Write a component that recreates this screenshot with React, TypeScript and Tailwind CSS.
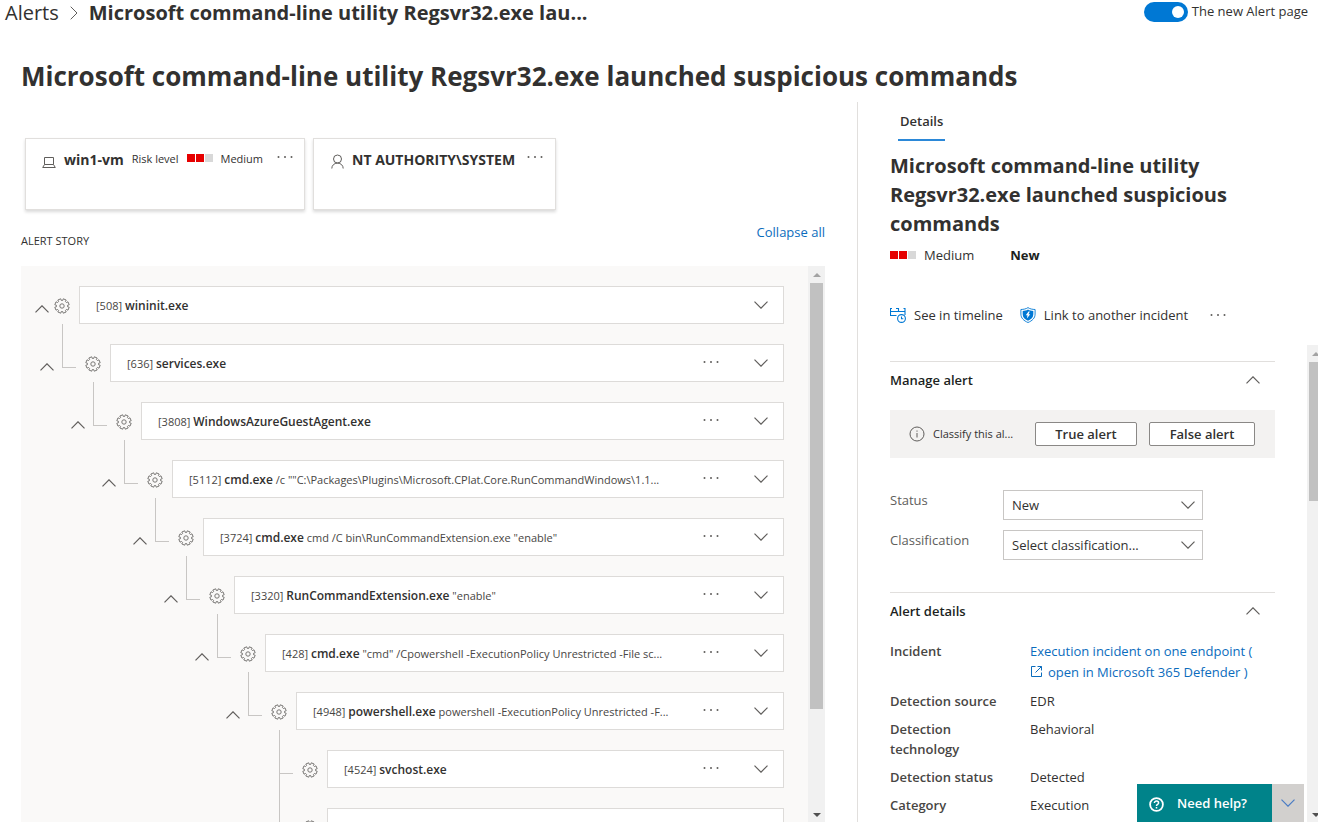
import React, { useState } from "react";

type ProcessNode = {
  id: string;
  pid?: string;
  name?: string;
  args?: string;
  noMenu?: boolean;
  hasMore?: boolean;
  children?: ProcessNode[];
};

const tree: ProcessNode = {
  id: "p0",
  pid: "508",
  name: "wininit.exe",
  noMenu: true,
  children: [
    {
      id: "p1",
      pid: "636",
      name: "services.exe",
      children: [
        {
          id: "p2",
          pid: "3808",
          name: "WindowsAzureGuestAgent.exe",
          children: [
            {
              id: "p3",
              pid: "5112",
              name: "cmd.exe",
              args: '/c ""C:\\Packages\\Plugins\\Microsoft.CPlat.Core.RunCommandWindows\\1.1...',
              children: [
                {
                  id: "p4",
                  pid: "3724",
                  name: "cmd.exe",
                  args: 'cmd /C bin\\RunCommandExtension.exe "enable"',
                  children: [
                    {
                      id: "p5",
                      pid: "3320",
                      name: "RunCommandExtension.exe",
                      args: '"enable"',
                      children: [
                        {
                          id: "p6",
                          pid: "428",
                          name: "cmd.exe",
                          args: '"cmd" /Cpowershell -ExecutionPolicy Unrestricted -File sc...',
                          children: [
                            {
                              id: "p7",
                              pid: "4948",
                              name: "powershell.exe",
                              args: "powershell -ExecutionPolicy Unrestricted -F...",
                              children: [
                                { id: "p8", pid: "4524", name: "svchost.exe" },
                                { id: "p9", hasMore: true },
                              ],
                            },
                          ],
                        },
                      ],
                    },
                  ],
                },
              ],
            },
          ],
        },
      ],
    },
  ],
};

function Chevron({ up = false, className = "" }: { up?: boolean; className?: string }) {
  return (
    <svg width="14" height="8" viewBox="0 0 14 8" fill="none" stroke="currentColor" strokeWidth="1.2" className={className} aria-hidden="true">
      <path d={up ? "M0.5 7.3 7 0.8l6.5 6.5" : "M0.5 0.7 7 7.2l6.5-6.5"} />
    </svg>
  );
}

function Dots() {
  return (
    <svg width="16" height="4" viewBox="0 0 16 4" fill="#605e5c" aria-hidden="true">
      <circle cx="1.5" cy="2" r="1" />
      <circle cx="8" cy="2" r="1" />
      <circle cx="14.5" cy="2" r="1" />
    </svg>
  );
}

const gearPath = (() => {
  const points: string[] = [];
  for (let tooth = 0; tooth < 8; tooth++) {
    const mid = (tooth * Math.PI) / 4 + Math.PI / 8;
    const corners: [number, number][] = [
      [-0.27, 5.6],
      [-0.22, 7.3],
      [0.22, 7.3],
      [0.27, 5.6],
    ];
    for (const [offset, radius] of corners) {
      const x = 8 + radius * Math.cos(mid + offset);
      const y = 8 + radius * Math.sin(mid + offset);
      points.push(`${x.toFixed(2)} ${y.toFixed(2)}`);
    }
  }
  return `M${points.join("L")}Z`;
})();

function Gear() {
  return (
    <svg width="16" height="16" viewBox="0 0 16 16" fill="none" stroke="#797775" strokeWidth="1" strokeLinejoin="round" aria-hidden="true">
      <path d={gearPath} />
      <circle cx="8" cy="8" r="2.2" />
    </svg>
  );
}

function Severity() {
  return (
    <span className="flex shrink-0 gap-px" aria-hidden="true">
      <span className="h-2 w-2 bg-[#e60000]" />
      <span className="h-2 w-2 bg-[#e60000]" />
      <span className="h-2 w-2 bg-[#d8d8d8]" />
    </span>
  );
}

function ScrollBar({ thumb }: { thumb: string }) {
  return (
    <div className="flex w-[17px] shrink-0 flex-col items-center bg-[#f1f1f1]" aria-hidden="true">
      <div className="flex h-[17px] shrink-0 items-center">
        <svg width="8" height="4" viewBox="0 0 8 4"><path d="M0 4 4 0l4 4z" fill="#a3a3a3" /></svg>
      </div>
      <div className={`w-[13px] bg-[#c1c1c1] ${thumb}`} />
      <div className="mt-auto flex h-[15px] shrink-0 items-center">
        <svg width="8" height="4" viewBox="0 0 8 4"><path d="M0 0h8L4 4z" fill="#505050" /></svg>
      </div>
    </div>
  );
}

function ProcessItem({ node, root = false, last = true }: { node: ProcessNode; root?: boolean; last?: boolean }) {
  const [open, setOpen] = useState(true);
  return (
    <li>
      <div className="flex items-stretch">
        <div className={`flex h-[38px] w-[14px] shrink-0 items-center pt-2 ${root ? "" : "mt-5"}`}>
          {node.children && (
            <button type="button" aria-label={`Toggle ${node.name}`} aria-expanded={open} onClick={() => setOpen(!open)}>
              <Chevron up={open} className="text-[#605e5c]" />
            </button>
          )}
        </div>
        {root ? (
          <div className="w-[5px] shrink-0" />
        ) : (
          <div className="mr-[9px] ml-2 flex w-[14px] shrink-0 flex-col">
            <div className="h-11 border-b border-l border-[#c8c6c4]" />
            {!last && <div className="flex-1 border-l border-[#c8c6c4]" />}
          </div>
        )}
        <div className={`-mb-0.5 mr-[9px] flex h-10 shrink-0 items-center ${root ? "" : "mt-5"}`}>
          <Gear />
        </div>
        <div className={`flex h-[38px] min-w-0 flex-1 items-center border border-[#dddbd9] bg-white pr-[15px] pl-4 ${root ? "" : "mt-5"}`}>
          <p className="min-w-0 flex-1 overflow-hidden pt-px text-[11px] leading-4 whitespace-nowrap text-[#484644]">
            {node.name && (
              <>
                [{node.pid}] <span className="text-xs font-semibold text-[#323130]">{node.name}</span> {node.args}
              </>
            )}
          </p>
          {!node.noMenu && (
            <button type="button" aria-label="More actions" className="ml-3 pb-0.5">
              <Dots />
            </button>
          )}
          <button type="button" aria-label="Expand details" className="ml-[35px]">
            <Chevron className="text-[#605e5c]" />
          </button>
        </div>
      </div>
      {open && node.children && (
        <ul className={root ? "pl-[5px]" : "pl-[31px]"}>
          {node.children.map((child, i) => (
            <ProcessItem key={child.id} node={child} last={!child.hasMore && i === node.children!.length - 1} />
          ))}
        </ul>
      )}
    </li>
  );
}

function Section({ title, className, children }: { title: string; className: string; children: React.ReactNode }) {
  return (
    <section className={`border-t border-[#e1dfdd] ${className}`}>
      <div className="flex h-9 items-center justify-between pr-[15px]">
        <h3 className="pt-0.5 text-[13px] font-semibold text-[#201f1e]">{title}</h3>
        <button type="button" aria-label={`Collapse ${title}`}>
          <Chevron up className="text-[#605e5c]" />
        </button>
      </div>
      {children}
    </section>
  );
}

function Field({ id, label, options }: { id: string; label: string; options: string[] }) {
  return (
    <div className="flex items-start">
      <label htmlFor={id} className="w-[113px] shrink-0 text-[13px] leading-5 text-[#605e5c]">
        {label}
      </label>
      <div className="relative w-[200px]">
        <select id={id} className="h-[30px] w-full appearance-none rounded-none border border-[#c8c6c4] bg-white pt-0.5 pl-2 text-[13px] text-[#323130]">
          {options.map((o) => (
            <option key={o}>{o}</option>
          ))}
        </select>
        <Chevron className="pointer-events-none absolute top-[11px] right-2 text-[#605e5c]" />
      </div>
    </div>
  );
}

function DetailRow({ label, children }: { label: string; children: React.ReactNode }) {
  return (
    <div className="flex">
      <dt className="w-[140px] shrink-0 pr-5 font-semibold text-[#484644]">{label}</dt>
      <dd className="min-w-0 flex-1">{children}</dd>
    </div>
  );
}

export default function App() {
  return (
    <div className="relative flex h-screen flex-col overflow-hidden bg-white font-['Open_Sans','Noto_Sans',sans-serif] text-[#323130]">
      <header className="flex h-[26px] shrink-0 items-center justify-between pr-[10px] pl-[5px]">
        <nav aria-label="Breadcrumb" className="flex items-center text-xl">
          <a href="#alerts">Alerts</a>
          <svg width="8" height="14" viewBox="0 0 8 14" fill="none" stroke="#605e5c" className="mr-[11px] ml-[11px]" aria-hidden="true">
            <path d="M0.7 0.7 7 7 0.7 13.3" />
          </svg>
          <span className="font-bold">Microsoft command-line utility Regsvr32.exe lau...</span>
        </nav>
        <label className="flex items-center gap-1 pb-0.5 text-[13px]">
          <input
            type="checkbox"
            role="switch"
            defaultChecked
            className="flex h-5 w-11 appearance-none items-center justify-start rounded-full bg-[#8a8886] px-1 before:h-3 before:w-3 before:rounded-full before:bg-white checked:justify-end checked:bg-[#0078d4]"
          />
          The new Alert page
        </label>
      </header>
      <h1 className="shrink-0 pt-[26px] pb-0.5 pl-[21px] text-[26px] leading-[48px] font-bold whitespace-nowrap">
        Microsoft command-line utility Regsvr32.exe launched suspicious commands
      </h1>

      <main className="flex min-h-0 flex-1">
        <div className="flex min-w-0 flex-1 flex-col pr-8 pl-[21px]">
          <div className="mt-9 ml-1 flex gap-2">
            <div className="flex h-[72px] w-[280px] items-start border border-[#e1dfdd] pt-3 pr-[11px] pl-4 shadow-[0_2px_3px_rgba(0,0,0,0.15)]">
              <svg width="14" height="12" viewBox="0 0 14 12" fill="none" stroke="#605e5c" className="mt-[5px]" aria-hidden="true">
                <path d="M2.5 8.5v-7h9v7zM2.5 8.5 0.7 11.5h12.6l-1.8-3" />
              </svg>
              <span className="ml-2 text-sm leading-[18px] font-bold">win1-vm</span>
              <span className="ml-2 text-[11px] leading-4">Risk level</span>
              <span className="mt-[3px] ml-2"><Severity /></span>
              <span className="ml-2 text-[11px] leading-4">Medium</span>
              <button type="button" aria-label="More actions" className="mt-1 ml-auto"><Dots /></button>
            </div>
            <div className="flex h-[72px] w-[243px] items-start border border-[#e1dfdd] pt-3 pr-3 pl-[17px] shadow-[0_2px_3px_rgba(0,0,0,0.15)]">
              <svg width="13" height="15" viewBox="0 0 13 15" fill="none" stroke="#605e5c" className="mt-[3px]" aria-hidden="true">
                <circle cx="6.5" cy="5" r="4" />
                <path d="M0.8 14.5c0-3 2.3-5.4 5.7-5.4s5.7 2.4 5.7 5.4" />
              </svg>
              <span className="ml-2 text-sm leading-[18px] font-bold">NT AUTHORITY\SYSTEM</span>
              <button type="button" aria-label="More actions" className="mt-1 ml-auto"><Dots /></button>
            </div>
          </div>

          <div className="mt-3 flex h-11 shrink-0 items-start justify-between">
            <h2 className="pt-[11px] text-[11px] leading-4">ALERT STORY</h2>
            <button type="button" className="text-[13px] leading-5 text-[#0b6cbd]">Collapse all</button>
          </div>

          <div className="flex min-h-0 flex-1 bg-[#faf9f8]">
            <ul className="min-w-0 flex-1 overflow-hidden pt-5 pr-6 pl-[14px]">
              <ProcessItem node={tree} root />
            </ul>
            <ScrollBar thumb="h-[426px]" />
          </div>
        </div>

        <aside className="flex w-[461px] shrink-0 flex-col border-l border-[#e1dfdd]">
          <div className="h-[243px] shrink-0 pl-8">
            <div role="tablist" className="pt-1.5 pl-2">
              <button type="button" role="tab" aria-selected="true" className="h-8 border-b-2 border-[#2b88d8] px-0.5 pb-1 text-[13px] font-semibold">
                Details
              </button>
            </div>
            <h2 className="mt-[10px] w-[385px] pr-8 text-xl leading-[29px] font-bold">
              Microsoft command-line utility Regsvr32.exe launched suspicious commands
            </h2>
            <div className="mt-[7px] flex items-center text-[13px] leading-5">
              <Severity />
              <span className="ml-2">Medium</span>
              <span className="ml-9 font-bold text-[#201f1e]">New</span>
            </div>
            <div className="mt-10 flex items-center text-[13px] leading-5">
              <button type="button" className="flex items-center gap-2">
                <svg width="16" height="16" viewBox="0 0 16 16" fill="none" stroke="#0078d4" strokeWidth="1.1" aria-hidden="true">
                  <path d="M2 1.5H.5V9M.5 4.5H15M6 1.5H8.5V4.5M13.5 1.5H15V8M.5 8.5H6.5" />
                  <circle cx="11.5" cy="11.5" r="3.9" />
                  <path d="M11.5 9.5v2.3h1.8" />
                </svg>
                See in timeline
              </button>
              <button type="button" className="ml-[17px] flex items-center gap-2">
                <svg width="16" height="16" viewBox="0 0 16 16" fill="none" aria-hidden="true">
                  <path d="M8 .6C6 2 3.6 2.4.9 2.5v4.6c0 4 2.9 6.700 7.100 8.400 4.200-1.700 7.100-4.400 7.100-8.400V2.500C12.400 2.400 10 2 8 .6z" stroke="#0078d4" strokeWidth="0.9" />
                  <path d="M8 2.400C6.400 3.400 4.600 3.800 2.700 3.900v3.300c0 3.100 2.100 5.100 5.300 6.500 3.200-1.400 5.300-3.400 5.300-6.500V3.900C11.400 3.800 9.600 3.400 8 2.400z" fill="#0078d4" />
                  <path d="M8.500 4.500 5.800 8.300h1.700L6.900 11.400l3.300-4.200H8.500l1.300-2.700z" fill="#fff" />
                </svg>
                Link to another incident
              </button>
              <button type="button" aria-label="More actions" className="ml-[22px]"><Dots /></button>
            </div>
          </div>

          <div className="flex min-h-0 flex-1">
            <div className="min-w-0 flex-1 overflow-hidden px-8 pt-4">
              <Section title="Manage alert" className="h-[231px]">
                <div className="mt-3 flex h-12 items-center bg-[#f3f2f1] pr-5 pl-[19px]">
                  <svg width="16" height="16" viewBox="0 0 16 16" fill="none" stroke="#605e5c" aria-hidden="true">
                    <circle cx="8" cy="8" r="7" />
                    <path d="M8 7v4.5M8 4.5v1.2" />
                  </svg>
                  <span className="ml-2 min-w-0 flex-1 pt-px text-[11px] whitespace-nowrap">Classify this al...</span>
                  <button type="button" className="h-6 w-[102px] rounded-xs border border-[#8a8886] bg-white text-[13px] leading-5 font-semibold">True alert</button>
                  <button type="button" className="ml-3 h-6 w-[106px] rounded-xs border border-[#8a8886] bg-white text-[13px] leading-5 font-semibold">False alert</button>
                </div>
                <div className="mt-8 flex flex-col gap-[10px]">
                  <Field id="status" label="Status" options={["New", "In progress", "Resolved"]} />
                  <Field id="classification" label="Classification" options={["Select classification...", "True alert", "False alert"]} />
                </div>
              </Section>
              <Section title="Alert details" className="">
                <dl className="mt-3 flex flex-col gap-2 text-[13px] leading-5">
                  <DetailRow label="Incident">
                    <span className="block leading-[21px] whitespace-nowrap text-[#0b6cbd]">
                      <a href="#incident">Execution incident on one endpoint</a> (
                      <br />
                      <a href="#defender">
                        <svg width="11" height="11" viewBox="0 0 11 11" fill="none" stroke="currentColor" className="mr-[6px] ml-px inline align-baseline" aria-hidden="true">
                          <path d="M4.5 .5h-4v10h10v-4M6.5.5h4v4M10.5.5 4.500 6.500" />
                        </svg>
                        open in Microsoft 365 Defender
                      </a>{" "}
                      )
                    </span>
                  </DetailRow>
                  <DetailRow label="Detection source">EDR</DetailRow>
                  <DetailRow label="Detection technology">Behavioral</DetailRow>
                  <DetailRow label="Detection status">Detected</DetailRow>
                  <DetailRow label="Category">Execution</DetailRow>
                </dl>
              </Section>
            </div>
            <div className="flex w-[11px] shrink-0 overflow-hidden">
              <ScrollBar thumb="h-[139px]" />
            </div>
          </div>
        </aside>
      </main>

      <div className="absolute right-[14px] bottom-0 flex h-[38px]">
        <button type="button" className="flex w-[135px] items-center bg-[#00838a] pt-0.5 pl-3 text-[13px] font-semibold text-white">
          <svg width="15" height="15" viewBox="0 0 15 15" fill="none" stroke="#fff" strokeWidth="1.8" className="mr-[13px]" aria-hidden="true">
            <circle cx="7.5" cy="7.5" r="6.4" />
            <path d="M5.4 6c0-2.7 4.2-2.5 4.2-.1 0 1.5-2.1 1.500-2.100 3M7.500 10v1.600" strokeWidth="1.5" />
          </svg>
          Need help?
        </button>
        <button type="button" aria-label="Minimize help" className="flex w-8 items-center justify-center bg-[#d2d0ce] text-[#4a7cc4]">
          <Chevron />
        </button>
      </div>
    </div>
  );
}
